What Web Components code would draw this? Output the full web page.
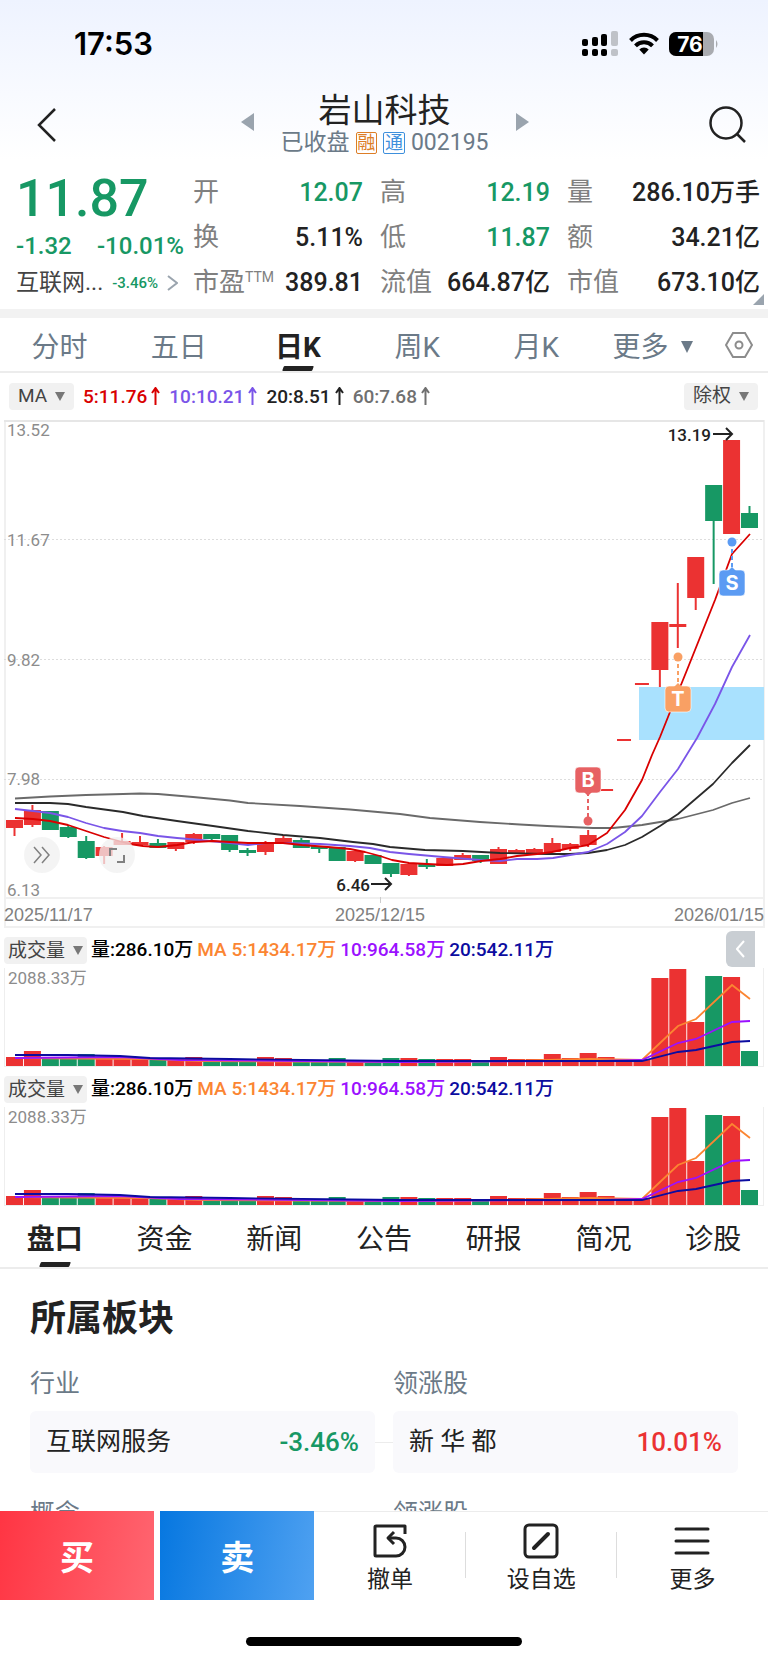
<!DOCTYPE html>
<html lang="zh-CN">
<head>
<meta charset="utf-8">
<meta name="viewport" content="width=device-width, initial-scale=1">
<title>岩山科技 002195</title>
<style>
  body {
    --up: #eb3232;
    --down: #179864;
    --ink: #222;
    --muted: #6b7a88;
    --grey: #808080;
    --line: #ececec;
    margin: 0;
    height: 100vh;
    display: flex;
    flex-direction: column;
    font-family: Roboto, "Noto Sans CJK SC", sans-serif;
    color: var(--ink);
    background: linear-gradient(#eef3ff, #fff 160px);
  }

  main {
    flex: 1;
    min-height: 0;
    overflow: hidden;
  }
</style>
</head>
<body>
<status-bar time="17:53" battery="76"></status-bar>
<stock-nav name="岩山科技" code="002195">已收盘</stock-nav>
<main>
  <stock-quote></stock-quote>
  <period-tabs></period-tabs>
  <ma-bar></ma-bar>
  <k-chart></k-chart>
  <volume-chart collapsible></volume-chart>
  <volume-chart></volume-chart>
  <info-tabs></info-tabs>
  <sector-list></sector-list>
</main>
<trade-bar></trade-bar>

<script>
const RESET = `
  * { box-sizing: border-box; }
  button, select {
    font: inherit;
    color: inherit;
    margin: 0;
    padding: 0;
    border: 0;
    background: none;
    appearance: none;
  }
  a { color: inherit; text-decoration: none; }
  svg { display: block; }
`

class BaseElement extends HTMLElement {
    constructor() {
        super();
        this.attachShadow({ mode: 'open' });
    }

    connectedCallback() {
        this.shadowRoot.innerHTML = `<style>${RESET}</style>${this.render()}`
    }
}

class StatusBar extends BaseElement {
    render() {
        return `
        <style>
        :host {
            display: flex;
            align-items: center;
            justify-content: space-between;
            height: 87px;
            padding: 0 48px 0 74px;
            font-family: Inter, sans-serif;
            font-weight: 600;
            color: #000;
            box-sizing: border-box;
        }
        time { font-size: 31px; }
        .icons { display: flex; align-items: center; gap: 10px; }
        text { font-size: 21px; font-weight: 700; fill: #fff; }
        </style>
        <time>${this.getAttribute('time')}</time>
        <div class="icons">
            <svg width="37" height="25" viewBox="0 0 37 25">
                <g>
                    <rect x="0" y="8" width="6" height="7" rx="2"/><rect x="10" y="6" width="6" height="9" rx="2"/><rect x="19" y="3" width="6" height="12" rx="2"/>
                    <rect x="0" y="18" width="6" height="7" rx="2"/><rect x="10" y="18" width="6" height="7" rx="2"/><rect x="19" y="18" width="6" height="7" rx="2"/>
                </g>
                <g fill="#bfc2c8"><rect x="29" y="0" width="7" height="15" rx="2"/><rect x="29" y="18" width="7" height="7" rx="2"/></g>
            </svg>
            <svg width="30" height="23" viewBox="0 0 30 23">
                <g fill="none" stroke="#000" stroke-width="4">
                    <path d="M1.500 8.500A19 19 0 0 1 28.500 8.500"/>
                    <path d="M6.500 13.800A12 12 0 0 1 23.500 13.800"/>
                </g>
                <path d="M10.300 17.500a6.800 6.800 0 0 1 9.400 0L15 22.500z"/>
            </svg>
            <svg width="51" height="26" viewBox="0 0 51 26">
                <defs><clipPath id="body"><rect y="1" width="45" height="24" rx="7"/></clipPath></defs>
                <g clip-path="url(#body)"><rect width="45" height="26" fill="#a9abb0"/><rect width="34" height="26"/></g>
                <path d="M47 9q3 4 0 8z" fill="#a9abb0"/>
                <text x="21" y="21" text-anchor="middle">${this.getAttribute('battery')}</text>
            </svg>
        </div>`
    }
}
window.customElements.define('status-bar', StatusBar);

class StockNav extends BaseElement {
    render() {
        return `
        <style>
        :host {
            display: grid;
            grid-template-columns: 1fr auto 1fr;
            align-items: center;
            height: 73px;
            padding: 0 21px 0 36px;
            box-sizing: border-box;
        }
        .center { display: flex; align-items: center; gap: 31px; margin-right: 14px; }
        .step { padding-bottom: 4px; }
        .title { width: 200px; text-align: center; }
        .search { justify-self: end; }
        h1 { margin: 0; padding-top: 1px; font-size: 33px; font-weight: 400; line-height: 38px; }
        p {
            display: flex;
            align-items: center;
            justify-content: center;
            gap: 6px;
            margin: 0 -4px;
            font-size: 23px;
            line-height: 26px;
            white-space: nowrap;
            color: var(--muted);
        }
        i {
            width: 22px;
            height: 22px;
            border: 1px solid;
            border-radius: 2px;
            font-size: 18px;
            line-height: 20px;
            font-style: normal;
            text-align: center;
        }
        .rong { color: #dd7d26; }
        .tong { color: #3d8fdc; }
        </style>
        <button aria-label="返回"><svg width="22" height="36" viewBox="0 0 22 36"><path d="M19 3L3 19L19 35" fill="none" stroke="#222" stroke-width="2.500"/></svg></button>
        <div class="center">
            <button class="step" aria-label="上一只"><svg width="13" height="18"><path d="M13 0v18L0 9z" fill="#9aa4ae"/></svg></button>
            <div class="title">
                <h1>${this.getAttribute('name')}</h1>
                <p><slot></slot><i class="rong">融</i><i class="tong">通</i><span>${this.getAttribute('code')}</span></p>
            </div>
            <button class="step" aria-label="下一只"><svg width="13" height="18"><path d="M0 0v18L13 9z" fill="#9aa4ae"/></svg></button>
        </div>
        <button class="search" aria-label="搜索"><svg width="38" height="38" viewBox="0 0 38 38"><g fill="none" stroke="#222" stroke-width="2.500"><circle cx="17" cy="18" r="15.500"/><path d="M28 29l8 8"/></g></svg></button>`
    }
}
window.customElements.define('stock-nav', StockNav);

class StockQuote extends BaseElement {
    render() {
        const cells = [
            ['开', '12.07', 'down'], ['高', '12.19', 'down'], ['量', '286.10万手'],
            ['换', '5.11%'], ['低', '11.87', 'down'], ['额', '34.21亿'],
            ['市盈<sup>TTM</sup>', '389.81'], ['流值', '664.87亿'], ['市值', '673.10亿'],
        ]
        return `
        <style>
        :host {
            position: relative;
            display: grid;
            grid-template-columns: 162px 1fr;
            gap: 15px;
            height: 158px;
            padding: 10px 8px 0 16px;
            border-bottom: 9px solid #f2f2f2;
            box-sizing: border-box;
        }
        .price { color: var(--down); font-weight: 500; }
        .last { font-size: 52px; line-height: 58px; }
        .change { display: flex; justify-content: space-between; margin-right: -6px; font-size: 24px; line-height: 36px; }
        .sector { display: flex; align-items: center; justify-content: space-between; font-size: 23px; line-height: 38px; white-space: nowrap; }
        .sector span { color: #444; }
        .sector b { font-size: 15px; font-weight: 500; color: var(--down); }
        dl {
            display: grid;
            grid-template-columns: 170px 170px 1fr;
            column-gap: 17px;
            grid-auto-rows: 45px;
            margin: 0;
            font-size: 25px;
            line-height: 45px;
        }
        div.cell { display: flex; justify-content: space-between; white-space: nowrap; }
        dt { font-size: 26px; color: var(--grey); }
        sup { font-size: 14px; line-height: 14px; vertical-align: 9px; }
        dd { margin: 0; font-weight: 500; }
        .down { color: var(--down); }
        .more { position: absolute; right: 4px; bottom: 4px; }
        </style>
        <div>
            <div class="price last">11.87</div>
            <div class="price change"><span>-1.32</span><span>-10.01%</span></div>
            <a class="sector" href="#"><span>互联网...</span><b>-3.46%</b><svg width="11" height="16"><path d="M1 1l9 7l-9 7" fill="none" stroke="#9aa4ae" stroke-width="2"/></svg></a>
        </div>
        <dl>${cells.map(([k, v, c = '']) => `<div class="cell"><dt>${k}</dt><dd class="${c}">${v}</dd></div>`).join('')}</dl>
        <svg class="more" width="11" height="11"><path d="M11 0v11H0z" fill="#9aa4ae"/></svg>`
    }
}
window.customElements.define('stock-quote', StockQuote);

const TAB_STYLE = `
  :host {
      display: grid;
      align-items: stretch;
      border-bottom: 2px solid var(--line);
      font-size: 28px;
      box-sizing: border-box;
  }
  button { position: relative; white-space: nowrap; }
  [aria-selected=true] { font-weight: 700; color: var(--ink); }
  [aria-selected=true]::after {
      content: "";
      position: absolute;
      left: calc(50% - 15px);
      bottom: 0;
      width: 30px;
      height: 5px;
      background: var(--ink);
      border-radius: 1px;
      transform: skewX(-20deg);
  }
`

class PeriodTabs extends BaseElement {
    render() {
        return `
        <style>
        ${TAB_STYLE}
        :host { grid-template-columns: repeat(5, 1fr) 114px 58px; height: 55px; color: var(--muted); }
        .more, .set { display: flex; align-items: center; justify-content: center; gap: 13px; }
        .more svg { margin-top: 4px; }
        </style>
        ${['分时', '五日', '日K', '周K', '月K'].map(t => `<button role="tab" aria-selected="${t == '日K'}">${t}</button>`).join('')}
        <button class="more">更多<svg width="12" height="12"><path d="M0 0h12L6 12z" fill="#6b7a88"/></svg></button>
        <button class="set" aria-label="设置"><svg width="28" height="26" viewBox="0 0 28 26"><g fill="none" stroke="#8c8c8c" stroke-width="2"><path d="M8 1h12l7 12l-7 12H8L1 13z"/><circle cx="14" cy="13" r="3.500"/></g></svg></button>`
    }
}
window.customElements.define('period-tabs', PeriodTabs);

class InfoTabs extends BaseElement {
    render() {
        return `
        <style>
        ${TAB_STYLE}
        :host { grid-template-columns: repeat(7, 1fr); height: 62px; }
        </style>
        ${['盘口', '资金', '新闻', '公告', '研报', '简况', '诊股'].map((t, i) => `<button role="tab" aria-selected="${i == 0}">${t}</button>`).join('')}`
    }
}
window.customElements.define('info-tabs', InfoTabs);

// small grey drop-down used above every chart
class PillSelect extends BaseElement {
    render() {
        return `
        <style>
        :host {
            display: inline-flex;
            align-items: center;
            gap: 7px;
            height: 27px;
            padding: 0 var(--pill-pad, 9px);
            background: #f1f1f1;
            border-radius: 4px;
            font-size: 19px;
            color: #444;
            box-sizing: border-box;
        }
        select { line-height: 26px; }
        </style>
        <select aria-label="${this.getAttribute('label')}"><option>${this.getAttribute('value')}</option></select>
        <svg width="10" height="9"><path d="M0 0h10L5 9z" fill="#777"/></svg>`
    }
}
window.customElements.define('pill-select', PillSelect);

class MaBar extends BaseElement {
    render() {
        const items = [['5:11.76', '#d90000'], ['10:10.21', '#7a55e8'], ['20:8.51', '#222'], ['60:7.68', '#707070']]
        return `
        <style>
        :host {
            display: flex;
            align-items: center;
            gap: 9px;
            height: 46px;
            padding: 0 10px 0 9px;
            font-size: 19px;
            font-weight: 500;
            box-sizing: border-box;
        }
        span { display: flex; align-items: center; gap: 4px; }
        .right { margin-left: auto; }
        pill-select { font-weight: 400; }
        </style>
        <pill-select label="指标" value="MA"></pill-select>
        ${items.map(([t, c]) => `<span style="color:${c}">${t}<svg width="9" height="18"><path d="M4.500 18V1M1 6l3.500-5l3.500 5" fill="none" stroke="currentColor" stroke-width="2"/></svg></span>`).join('')}
        <pill-select class="right" label="复权" value="除权"></pill-select>`
    }
}
window.customElements.define('ma-bar', MaBar);

const STEP = 735 / 41
const centre = i => 14.5 + i * STEP

// [direction, open/close top, bottom, high, low]
const CANDLES = [
    ['r', 820, 828, 820, 836], ['r', 810, 825, 805, 827], ['g', 811, 830, 811, 830], ['g', 827, 837, 825, 838],
    ['g', 841, 858, 836, 859], ['r', 847, 856, 846, 864], ['r', 841, 845, 833, 845], ['r', 842, 845, 836, 845],
    ['g', 843, 848, 839, 848], ['r', 842, 849, 842, 851], ['r', 834, 842, 833, 844], ['g', 834, 839, 834, 841],
    ['g', 835, 850, 835, 852], ['g', 850, 853, 848, 856], ['r', 842, 852, 841, 855], ['r', 838, 843, 835, 843],
    ['g', 840, 848, 838, 848], ['g', 846, 849, 846, 853], ['g', 847, 861, 847, 861], ['r', 851, 861, 851, 862],
    ['g', 855, 864, 855, 864], ['g', 863, 874, 863, 877], ['r', 864, 875, 863, 876], ['g', 864, 867, 859, 869],
    ['r', 858, 866, 857, 866], ['r', 855, 860, 853, 860], ['g', 855, 861, 855, 863], ['r', 849, 864, 847, 864],
    ['r', 850, 854, 849, 854], ['r', 849, 854, 848, 854], ['r', 843, 852, 838, 852], ['r', 844, 849, 843, 851],
    ['r', 835, 845, 830, 847], ['r', 789, 791], ['r', 739, 741], ['r', 683, 685],
    ['r', 622, 670, 622, 687], ['r', 624, 627, 583, 648], ['r', 557, 598, 557, 610], ['g', 485, 521, 485, 584],
    ['r', 440, 534, 440, 534], ['g', 513, 528, 506, 528],
]

const COLORS = { r: '#eb3232', g: '#179864' }

const MA_LINES = [
    ['#6a6a6a', '15,798.500 50,796.500 86,795 123,794 140,793.500 158,794 193,797 230,800.500 248,803 300,806 350,809.500 400,814 430,818 480,822 520,824.500 547,826 593,828 613,828 642,825 678,819 713,810 732,803 750,798'],
    ['#2a2a2a', '15,803 50,803 68,804 86,807 123,812 143,816 177,821 213,826 248,831 283,835 320,838 353,842 373,844 390,847 425,850 463,851 500,853 547,854 570,854 588,853 607,850 625,845 642,837 660,826 678,814 713,784 732,763 750,745'],
    ['#7a55e8', '15,809 33,811 50,813 68,817 86,823 104,828 122,831 140,833 158,836 177,838 200,840 230,843 248,845 266,843 283,843 320,844 350,846 370,848 390,852 409,854 443,857 480,860 500,861 517,859 537,859 553,858 570,855 588,852 607,844 625,832 642,816 660,792 678,769 697,738 715,704 732,667 750,635'],
    ['#d90000', '15,818 33,819 50,821 68,825 86,831 104,837 115,840 130,844 143,846 158,847 177,845 194,842 213,841 230,842 248,843 283,843 302,845 328,847 350,849 365,852 380,856 392,860 409,863 427,864 447,865 463,864 481,861 500,859 517,856 537,854 552,852 570,848 588,845 607,833 625,810 642,780 652,755 660,737 670,712 687,670 697,645 715,600 732,554 750,534'],
]

class KChart extends BaseElement {
    candle([dir, top, bottom, high, low], i) {
        const x = centre(i)
        if (high == null) return `<rect x="${x - 7}" y="${top}" width="14" height="2" fill="${COLORS[dir]}"/>`
        return `<path d="M${x} ${high}V${low}" stroke="${COLORS[dir]}" stroke-width="2"/><rect x="${x - 8.5}" y="${top}" width="17" height="${bottom - top}" fill="${COLORS[dir]}"/>`
    }

    marker(letter, color, x, y, dot) {
        const up = dot < y
        return `
        <g fill="${color}">
            <path d="M${x} ${up ? dot : y + 12}V${up ? y - 14 : dot}" stroke="${color}" stroke-width="2" stroke-dasharray="4 3"/>
            <circle cx="${x}" cy="${dot}" r="4.500"/>
            <rect x="${x - 13}" y="${y - 13}" width="26" height="26" rx="4" stroke="#fff" stroke-opacity=".6"/>
            <path d="${up ? `M${x - 4} ${y - 12}l4-4l4 4z` : `M${x - 4} ${y + 12}l4 4l4-4z`}"/>
        </g>
        <text class="mark" x="${x}" y="${y + 7}">${letter}</text>`
    }

    render() {
        return `
        <style>
        :host { display: block; }
        svg { width: 100%; height: auto; }
        .axis { font-size: 17px; fill: #8c8c8c; }
        .date { font: 18px "Liberation Sans", sans-serif; fill: #808080; }
        .peak { font-size: 17px; font-weight: 500; fill: #222; }
        .mark { font: 700 20px Inter, sans-serif; fill: #fff; text-anchor: middle; }
        </style>
        <svg viewBox="0 419 768 510" role="img" aria-label="日K">
            <g fill="none" stroke="#f0f0f0" stroke-width="2"><path d="M4 898H764M5 420V928M764 420V928M4 927H764"/><path d="M4 421H764" stroke="#e6e6e6"/></g>
            <path d="M4 539.500H764M4 659.500H764M4 779.500H764" stroke="#ddd" stroke-dasharray="2 2"/>
            <path d="M380.500 897v6" stroke="#ccc"/>
            <rect x="639" y="687" width="125" height="53" fill="#a9e1fe"/>
            ${CANDLES.map(this.candle).join('')}
            <g fill="none" stroke-width="1.800" stroke-linejoin="round">${MA_LINES.map(([c, p]) => `<polyline points="${p}" stroke="${c}"/>`).join('')}</g>
            <g class="axis">
                <text x="7" y="436">13.52</text><text x="7" y="546">11.67</text><text x="7" y="666">9.82</text>
                <text x="7" y="785">7.98</text><text x="7" y="896">6.13</text>
            </g>
            <g class="date">
                <text x="4" y="921">2025/11/17</text><text x="380" y="921" text-anchor="middle">2025/12/15</text><text x="764" y="921" text-anchor="end">2026/01/15</text>
            </g>
            <text class="peak" x="711" y="441" text-anchor="end">13.19</text>
            <text class="peak" x="370" y="891" text-anchor="end">6.46</text>
            <path d="M713 434h19M726 428l6 6l-6 6M371 884h20M385 878l6 6l-6 6" fill="none" stroke="#222" stroke-width="2"/>
            ${this.marker('B', '#e76163', 588, 780, 821)}
            ${this.marker('T', '#f9a064', 678, 699, 657)}
            ${this.marker('S', '#5b9bf3', 732, 583, 542)}
            <g fill="#f0f0f0" fill-opacity=".75"><circle cx="42" cy="855" r="18"/><circle cx="117" cy="855" r="18"/></g>
            <g fill="none" stroke="#808080" stroke-width="1.500">
                <path d="M34 847l7 8l-7 8M42 847l7 8l-7 8"/>
                <path d="M110 856v-7h7M124 855v7h-7" stroke-width="2"/>
            </g>
        </svg>`
    }
}
window.customElements.define('k-chart', KChart);

const VOLUMES = [
    9, 15, 7, 7, 12, 7, 7, 7, 6, 7, 9, 6, 6, 6, 9, 8, 5, 5, 8, 6, 6, 8,
    8, 7, 7, 7, 6, 9, 7, 7, 12, 8, 13, 9, 7, 7, 88, 97, 44, 90, 89, 15,
]

class VolumeChart extends BaseElement {
    render() {
        const bars = VOLUMES.map((h, i) => `<rect x="${centre(i) - 8.5}" y="${98 - h}" width="17" height="${h}" fill="${COLORS[CANDLES[i][0]]}"/>`)
        return `
        <style>
        :host {
            position: relative;
            display: block;
            height: 139px;
            padding-top: 8px;
            box-sizing: border-box;
        }
        header { display: flex; align-items: center; gap: 4px; padding-left: 4px; height: 27px; font-size: 19px; line-height: 25px; font-weight: 500; white-space: nowrap; }
        header span { padding-bottom: 2px; }
        pill-select { --pill-pad: 4px; font-weight: 400; }
        .plot { margin-top: 4px; width: 100%; }
        text { font-size: 17px; fill: #8c8c8c; }
        .collapse {
            position: absolute;
            top: 2px;
            right: 13px;
            display: grid;
            place-items: center;
            width: 29px;
            height: 36px;
            background: #c9ced3;
            border-radius: 6px 0 0 6px;
        }
        </style>
        <header>
            <pill-select label="副图指标" value="成交量"></pill-select>
            <span style="color:#000">量:286.10万</span>
            <span style="color:#fb8532">MA 5:1434.17万</span>
            <span style="color:#9b11ff">10:964.58万</span>
            <span style="color:#0c0ca0">20:542.11万</span>
        </header>
        <svg class="plot" viewBox="0 0 768 100" role="img" aria-label="成交量">
            <path d="M4 98.500H764M4.500 0V98M763.500 0V98" stroke="#eee"/>
            <text x="8" y="16">2088.33万</text>
            ${bars.join('')}
            <g fill="none" stroke-width="1.800">
                <polyline stroke="#fb8532" points="15,90 150,91 200,93 400,94 500,93 590,91 642,92 678,58 696,51 732,17 750,31"/>
                <polyline stroke="#9b11ff" points="15,90 120,89 180,92 400,94 600,93 642,92 678,75 696,71 732,54 750,53"/>
                <polyline stroke="#0c0ca0" points="15,87 68,87 120,88 150,90 230,91 400,93 642,93 678,84 696,82 732,74 750,73"/>
            </g>
        </svg>
        ${this.hasAttribute('collapsible') ? `<button class="collapse" aria-label="收起"><svg width="9" height="18"><path d="M8 1L1 9l7 8" fill="none" stroke="#fff" stroke-width="2"/></svg></button>` : ''}`
    }
}
window.customElements.define('volume-chart', VolumeChart);

class SectorCard extends BaseElement {
    render() {
        const rate = this.getAttribute('rate')
        return `
        <style>
        :host {
            display: flex;
            align-items: center;
            justify-content: space-between;
            height: 62px;
            padding: 0 16px;
            background: #f9f9fc;
            border-radius: 6px;
            font-size: 25px;
            line-height: 30px;
            box-sizing: border-box;
        }
        b { font-size: 26px; font-weight: 500; color: var(${rate.startsWith('-') ? '--down' : '--up'}); }
        </style>
        <slot></slot><b>${rate}</b>`
    }
}
window.customElements.define('sector-card', SectorCard);

class SectorList extends BaseElement {
    render() {
        return `
        <style>
        :host { display: block; padding: 26px 30px 0; }
        h2 { margin: 0; font-size: 36px; line-height: 48px; font-weight: 700; }
        .row { display: grid; grid-template-columns: 1fr 18px 1fr; align-items: center; }
        .head { margin-top: 22px; height: 46px; align-items: start; font-size: 25px; line-height: 38px; color: var(--muted); }
        .head span:last-child { grid-column: 3; }
        hr { width: 100%; margin: 0; border: 0; border-top: 1px solid var(--line); }
        </style>
        <h2>所属板块</h2>
        <div class="row head"><span>行业</span><span>领涨股</span></div>
        <div class="row">
            <sector-card rate="-3.46%">互联网服务</sector-card>
            <hr>
            <sector-card rate="10.01%">新 华 都</sector-card>
        </div>
        <div class="row head"><span>概念</span><span>领涨股</span></div>`
    }
}
window.customElements.define('sector-list', SectorList);

class TradeBar extends BaseElement {
    render() {
        return `
        <style>
        :host { display: block; height: 151px; background: #fff; }
        nav { display: grid; grid-template-columns: 154fr 6fr 154fr 151fr 151fr 151fr; height: 89px; }
        .buy, .sell { font-size: 34px; font-weight: 700; color: #fff; }
        .buy { background: linear-gradient(100deg, #ff3543, #ff6671); }
        .sell { grid-column: 3; background: linear-gradient(100deg, #0677e0, #4fa1f1); }
        .tool {
            position: relative;
            display: flex;
            flex-direction: column;
            align-items: center;
            gap: 6px;
            padding-top: 11px;
            border-top: 1px solid var(--line);
            font-size: 23px;
            line-height: 30px;
        }
        .tool + .tool::before {
            content: "";
            position: absolute;
            left: -1px;
            top: 20px;
            height: 46px;
            border-left: 1px solid #ddd;
        }
        .home { width: 36%; height: 9px; margin: 37px auto 0; border-radius: 5px; background: #000; }
        g { fill: none; stroke: #222; stroke-width: 3; stroke-linejoin: round; }
        </style>
        <nav>
            <button class="buy">买</button>
            <button class="sell">卖</button>
            <button class="tool"><svg width="36" height="36" viewBox="0 0 36 36"><g><path d="M33 11V3H4q-1 0-1 1v28q0 1 1 1h20a9 9 0 0 0 0-18H17"/><path d="M22 9l-6 6l6 6"/></g></svg>撤单</button>
            <button class="tool"><svg width="36" height="36" viewBox="0 0 36 36"><g><rect x="2" y="2" width="32" height="32" rx="4"/><path d="M11 25L25 11" stroke-width="4" stroke-linecap="round"/></g></svg>设自选</button>
            <button class="tool"><svg width="36" height="36" viewBox="0 0 36 36"><g stroke-linecap="round"><path d="M2 6h32M2 18h32M2 30h32"/></g></svg>更多</button>
        </nav>
        <div class="home"></div>`
    }
}
window.customElements.define('trade-bar', TradeBar);
</script>
</body>
</html>
